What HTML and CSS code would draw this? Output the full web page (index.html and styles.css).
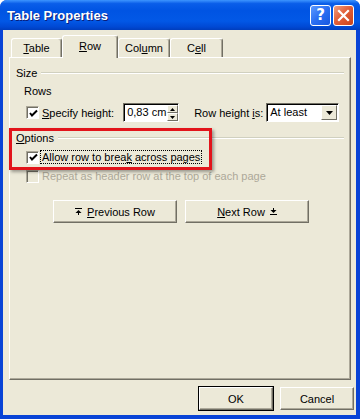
FILE: index.html
```html
<!DOCTYPE html>
<html lang="en">
<head>
  <meta charset="UTF-8">
  <title>Table Properties</title>
  <link rel="stylesheet" href="styles.css">
</head>
<body>

  <div class="window">

    <!-- title bar -->
    <div class="titlebar">
      <div class="title">Table Properties</div>
      <div class="caption-btn help">?</div>
      <div class="caption-btn close">
        <svg width="13" height="13" viewBox="0 0 13 13"><path d="M2 2 L11 11 M11 2 L2 11" stroke="#fff" stroke-width="2.2" stroke-linecap="square"/></svg>
      </div>
    </div>

    <div class="client">

      <!-- tabs -->
      <div class="tabs">
        <div class="tab tab-table"><u>T</u>able</div>
        <div class="tab tab-row active"><u>R</u>ow</div>
        <div class="tab tab-column">Col<u>u</u>mn</div>
        <div class="tab tab-cell">C<u>e</u>ll</div>
      </div>

      <div class="panel">

        <div class="group-title"><span>Size</span></div>
        <div class="sub-title">Rows</div>

        <div class="spec-row">
          <div class="check checked">
            <svg width="9" height="9" viewBox="0 0 9 9"><path d="M1 4 L3 6.5 L8 1.5" fill="none" stroke="#000" stroke-width="2"/></svg>
          </div>
          <div class="label"><u>S</u>pecify height:</div>
          <div class="spin">
            <div class="spin-text">0,83 cm</div>
            <div class="spin-btns">
              <div class="spin-btn"><svg width="5" height="3" viewBox="0 0 5 3"><path d="M2.5 0 L5 3 L0 3 Z" fill="#000"/></svg></div>
              <div class="spin-btn"><svg width="5" height="3" viewBox="0 0 5 3"><path d="M0 0 L5 0 L2.5 3 Z" fill="#000"/></svg></div>
            </div>
          </div>
          <div class="label row-height">Row height <u>i</u>s:</div>
          <div class="select">
            <div class="select-text">At least</div>
            <div class="select-btn"><svg width="7" height="4" viewBox="0 0 7 4"><path d="M0 0 L7 0 L3.5 4 Z" fill="#000"/></svg></div>
          </div>
        </div>

        <div class="group-title options"><span><u>O</u>ptions</span></div>

        <div class="check-row">
          <div class="check checked">
            <svg width="9" height="9" viewBox="0 0 9 9"><path d="M1 4 L3 6.5 L8 1.5" fill="none" stroke="#000" stroke-width="2"/></svg>
          </div>
          <div class="label focus">Allow row to brea<u>k</u> across pages</div>
        </div>

        <div class="check-row disabled">
          <div class="check"></div>
          <div class="label">Repeat as header row at the top of each page</div>
        </div>

        <div class="nav-buttons">
          <div class="button nav">
            <svg width="7" height="7" viewBox="0 0 7 7"><rect x="0" y="0" width="7" height="1" fill="#000"/><path d="M3.5 2 L6.5 5 L0.5 5 Z" fill="#000"/><rect x="3" y="5" width="1" height="2" fill="#000"/></svg>
            <span><u>P</u>revious Row</span>
          </div>
          <div class="button nav">
            <span><u>N</u>ext Row</span>
            <svg width="7" height="7" viewBox="0 0 7 7"><rect x="0" y="6" width="7" height="1" fill="#000"/><path d="M0.5 2 L6.5 2 L3.5 5 Z" fill="#000"/><rect x="3" y="0" width="1" height="2" fill="#000"/></svg>
          </div>
        </div>

      </div>

      <!-- bottom buttons -->
      <div class="footer">
        <div class="button default">OK</div>
        <div class="button">Cancel</div>
      </div>

    </div>

    <!-- red highlight frame -->
    <div class="highlight"></div>
  </div>

</body>
</html>
```

FILE: styles.css
```css
body {
  margin: 0;
  font-family: "Liberation Sans", Arial, sans-serif;
  font-size: 11px;
  color: #000;
}

u {
  text-decoration: underline;
  text-underline-offset: 1px;
}

.window {
  position: relative;
  width: 360px;
  height: 419px;
  box-sizing: border-box;
  display: flex;
  flex-direction: column;
  background: #0843d6;
  border-radius: 7px 7px 0 0;
  overflow: hidden;
}

/* title bar */
.titlebar {
  height: 30px;
  flex: none;
  display: flex;
  align-items: center;
  padding: 0 6px 0 7px;
  background: linear-gradient(to bottom, #3d95ff 0%, #0a5ee9 12%, #0054e3 35%, #0258e6 70%, #0048d3 90%, #003dbc 100%);
}

.title {
  flex: 1;
  color: #fff;
  font-family: "Liberation Sans", Arial, sans-serif;
  font-weight: bold;
  font-size: 13px;
  text-shadow: 1px 1px 0 #0a1d7a;
}

.caption-btn {
  width: 21px;
  height: 21px;
  box-sizing: border-box;
  border: 1px solid #fff;
  border-radius: 3px;
  margin-left: 2px;
  display: flex;
  align-items: center;
  justify-content: center;
}

.help {
  background: linear-gradient(135deg, #5c9bff 0%, #2a6ef2 50%, #1657e0 100%);
  color: #fff;
  font-family: "DejaVu Sans", sans-serif;
  font-weight: bold;
  font-size: 15px;
}

.close {
  background: linear-gradient(135deg, #f0a080 0%, #e2603a 45%, #c9421a 100%);
}

/* client area */
.client {
  flex: 1;
  display: flex;
  flex-direction: column;
  background: #ece9d8;
  margin: 0 4px 4px 3px;
}

.tabs {
  display: flex;
  align-items: flex-end;
  height: 27px;
  padding-left: 8px;
  flex: none;
}

.tab {
  height: 19px;
  line-height: 19px;
  box-sizing: border-box;
  text-align: center;
  border-top: 1px solid #fff;
  border-left: 1px solid #fff;
  border-right: 1px solid #716f64;
  border-radius: 3px 3px 0 0;
  box-shadow: inset -1px 0 0 #aca899;
}

.tab-table { width: 51px; }
.tab-row { width: 56px; }
.tab-column { width: 52px; }
.tab-cell { width: 53px; }

.tab.active {
  height: 23px;
  line-height: 21px;
  margin-bottom: -1px;
  background: #ece9d8;
  position: relative;
  z-index: 1;
}

.panel {
  height: 323px;
  box-sizing: border-box;
  margin: 0 5px 0 6px;
  padding: 8px 6px 0 6px;
  border-top: 1px solid #fff;
  border-left: 1px solid #fff;
  border-right: 1px solid #716f64;
  border-bottom: 1px solid #716f64;
  box-shadow: inset -1px -1px 0 #aca899;
}

.group-title {
  display: flex;
  align-items: center;
  height: 14px;
  gap: 4px;
}

.group-title::after {
  content: "";
  flex: 1;
  height: 0;
  border-top: 1px solid #d0d0bf;
  border-bottom: 1px solid #fff;
}

.group-title.options {
  margin-top: 9px;
}

.sub-title {
  height: 14px;
  line-height: 14px;
  margin: 4px 0 0 8px;
}

.spec-row {
  display: flex;
  align-items: center;
  height: 19px;
  margin-top: 5px;
  padding-left: 10px;
}

.check {
  width: 13px;
  height: 13px;
  box-sizing: border-box;
  background: #fff;
  border: 1px solid;
  border-color: #aca899 #fff #fff #aca899;
  box-shadow: inset 1px 1px 0 #716f64;
  display: flex;
  align-items: center;
  justify-content: center;
  flex: none;
}

.check svg {
  margin: 1px 0 0 1px;
}

.label {
  margin-left: 3px;
  white-space: nowrap;
}

.spin {
  display: flex;
  margin-left: 9px;
  height: 19px;
  box-sizing: border-box;
  border: 1px solid;
  border-color: #716f64 #fff #fff #716f64;
  box-shadow: inset 1px 1px 0 #000;
  background: #fff;
}

.spin-text {
  width: 40px;
  padding: 2px 0 0 3px;
}

.spin-btns {
  display: flex;
  flex-direction: column;
  padding: 1px 0 0 0;
}

.spin-btn {
  width: 11px;
  height: 8px;
  box-sizing: border-box;
  background: #ece9d8;
  border: 1px solid;
  border-color: #fff #716f64 #716f64 #fff;
  display: flex;
  align-items: center;
  justify-content: center;
}

.row-height {
  margin-left: 15px;
}

.select {
  display: flex;
  margin-left: 3px;
  width: 73px;
  height: 19px;
  box-sizing: border-box;
  border: 1px solid;
  border-color: #716f64 #fff #fff #716f64;
  box-shadow: inset 1px 1px 0 #000;
  background: #fff;
}

.select-text {
  flex: 1;
  padding: 2px 0 0 3px;
}

.select-btn {
  width: 16px;
  margin: 1px 1px 1px 0;
  box-sizing: border-box;
  background: #ece9d8;
  border: 1px solid;
  border-color: #fff #716f64 #716f64 #fff;
  display: flex;
  align-items: center;
  justify-content: center;
}

.check-row {
  display: flex;
  align-items: center;
  height: 14px;
  margin-top: 5px;
  padding-left: 10px;
}

.check-row .label.focus {
  outline: 1px dotted #000;
  outline-offset: 0;
  padding: 0 1px;
  margin-left: 2px;
}

.check-row.disabled .label {
  color: #aca899;
}

.check-row.disabled .check {
  background: #ece9d8;
}

.nav-buttons {
  display: flex;
  gap: 8px;
  margin: 17px 0 0 37px;
}

.button {
  height: 23px;
  box-sizing: border-box;
  display: flex;
  align-items: center;
  justify-content: center;
  background: #ece9d8;
  border: 1px solid;
  border-color: #fff #716f64 #716f64 #fff;
  box-shadow: inset -1px -1px 0 #aca899;
}

.button.nav {
  width: 124px;
  gap: 5px;
}

.footer {
  display: flex;
  justify-content: flex-end;
  gap: 7px;
  padding: 7px 2px 0 0;
}

.footer .button {
  width: 74px;
}

.button.default {
  outline: 1px solid #000;
  outline-offset: 0;
}

/* red highlight */
.highlight {
  position: absolute;
  left: 9px;
  top: 128px;
  width: 203px;
  height: 42px;
  box-sizing: border-box;
  border: 3px solid #e2141b;
  box-shadow: 2px 2px 3px rgba(0, 0, 0, 0.35);
}
```
